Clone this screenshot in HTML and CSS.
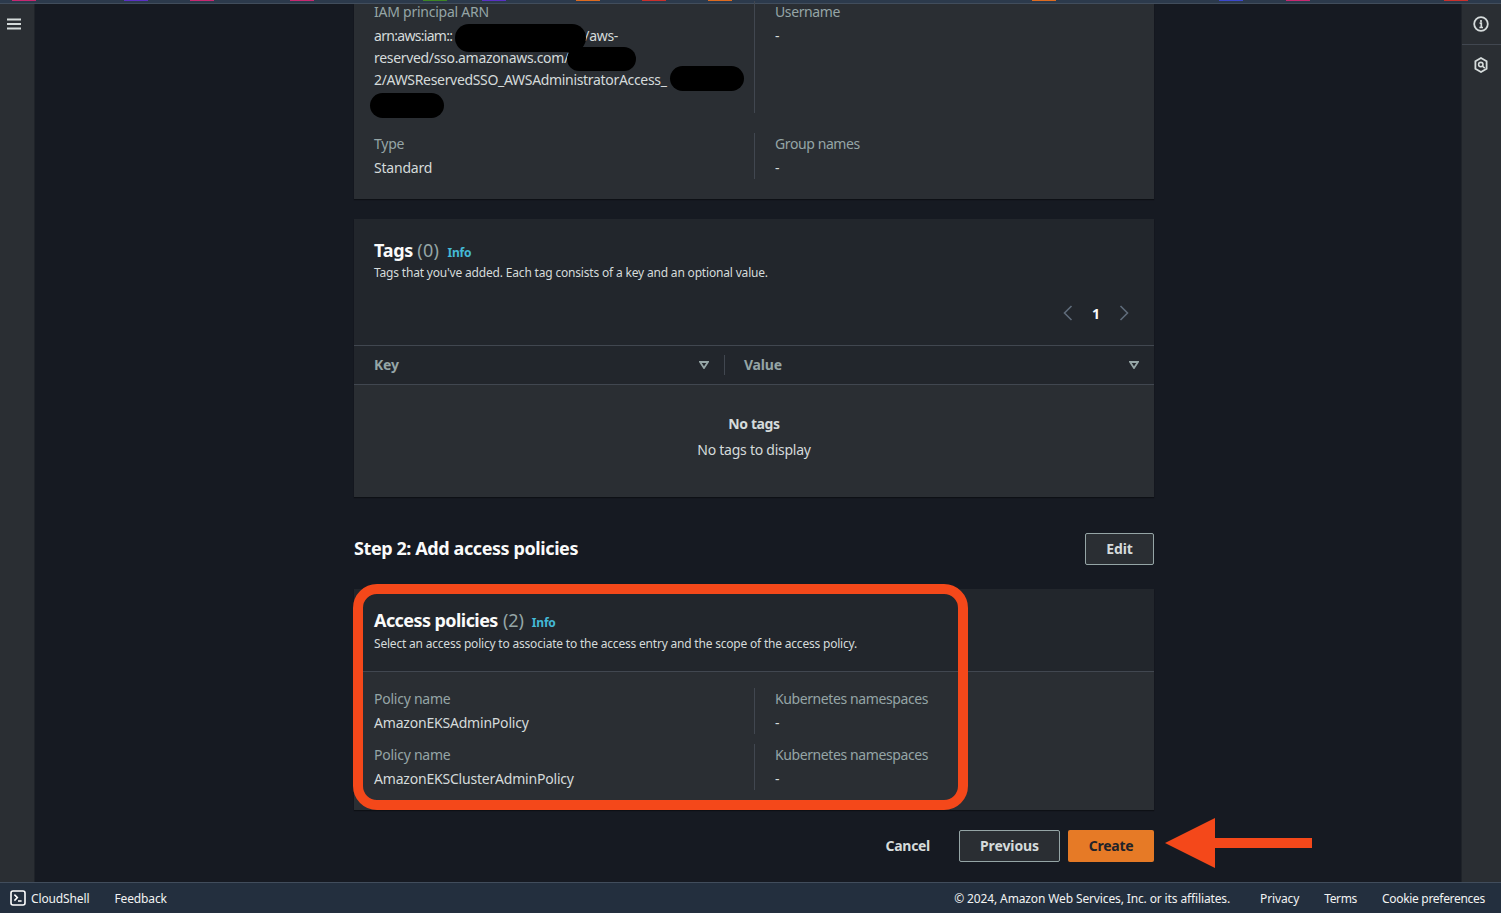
FILE: index.html
```html
<!DOCTYPE html>
<html lang="en">

<head>
    <meta charset="UTF-8">
    <meta name="viewport" content="width=device-width, initial-scale=1.0">
    <title>Review and create</title>
    <link rel="stylesheet" href="styles.css">
</head>

<body>
    <div class="stripe">
        <i class="tab pink s12"></i>
        <i class="tab purple s124"></i>
        <i class="tab pink s190"></i>
        <i class="tab pink s290"></i>
        <i class="tab green s423"></i>
        <i class="tab purple s482"></i>
        <i class="tab orange s576"></i>
        <i class="tab red s642"></i>
        <i class="tab orange s708"></i>
        <i class="tab orange s1032"></i>
        <i class="tab blue s1219"></i>
        <i class="tab pink s1286"></i>
        <i class="tab red s1444"></i>
    </div>

    <div class="shell">
        <aside class="rail rail-left">
            <svg class="menu-icon" width="14" height="12" viewBox="0 0 14 12">
                <path d="M0 1.5h14M0 6h14M0 10.5h14" stroke="#d5dbdb" stroke-width="2" />
            </svg>
        </aside>

        <main class="content">
            <section class="panel panel-top">
                <div class="kv-grid">
                    <div class="kv">
                        <div class="kv-label">IAM principal ARN</div>
                        <div class="kv-value arn"><span class="arn-head">arn:aws:iam::</span><span class="arn-gap"></span>/aws-<br>reserved/sso.amazonaws.com/<br>2/AWSReservedSSO_AWSAdministratorAccess_<br>&nbsp;</div>
                    </div>
                    <div class="kv kv-right">
                        <div class="kv-label">Username</div>
                        <div class="kv-value">-</div>
                    </div>
                    <div class="kv">
                        <div class="kv-label">Type</div>
                        <div class="kv-value">Standard</div>
                    </div>
                    <div class="kv kv-right">
                        <div class="kv-label">Group names</div>
                        <div class="kv-value">-</div>
                    </div>
                </div>
            </section>

            <section class="panel panel-tags">
                <header class="panel-head">
                    <h2>Tags <span class="count">(0)</span> <a class="info">Info</a></h2>
                    <p>Tags that you've added. Each tag consists of a key and an optional value.</p>
                </header>
                <div class="pager">
                    <svg width="10" height="16" viewBox="0 0 10 16"><path d="M8.5 1 1.5 8l7 7" fill="none" stroke="#5f6b7a" stroke-width="1.6" /></svg>
                    <b>1</b>
                    <svg width="10" height="16" viewBox="0 0 10 16"><path d="M1.5 1l7 7-7 7" fill="none" stroke="#5f6b7a" stroke-width="1.6" /></svg>
                </div>
                <div class="table-head">
                    <div class="th th-key">Key
                        <svg class="caret" width="10" height="8" viewBox="0 0 10 8"><path d="M1 1h8L5 7z" fill="none" stroke="#95a5a6" stroke-width="1.8" /></svg>
                    </div>
                    <div class="th th-value">Value
                        <svg class="caret" width="10" height="8" viewBox="0 0 10 8"><path d="M1 1h8L5 7z" fill="none" stroke="#95a5a6" stroke-width="1.8" /></svg>
                    </div>
                </div>
                <div class="empty">
                    <b>No tags</b>
                    <span>No tags to display</span>
                </div>
            </section>

            <div class="step-row">
                <h3>Step 2: Add access policies</h3>
                <button class="btn btn-edit">Edit</button>
            </div>

            <section class="panel panel-policies">
                <header class="panel-head head-policies">
                    <h2>Access policies <span class="count">(2)</span> <a class="info">Info</a></h2>
                    <p>Select an access policy to associate to the access entry and the scope of the access policy.</p>
                </header>
                <div class="kv-grid policy-grid">
                    <div class="kv">
                        <div class="kv-label">Policy name</div>
                        <div class="kv-value">AmazonEKSAdminPolicy</div>
                    </div>
                    <div class="kv kv-right">
                        <div class="kv-label">Kubernetes namespaces</div>
                        <div class="kv-value">-</div>
                    </div>
                    <div class="kv">
                        <div class="kv-label">Policy name</div>
                        <div class="kv-value">AmazonEKSClusterAdminPolicy</div>
                    </div>
                    <div class="kv kv-right">
                        <div class="kv-label">Kubernetes namespaces</div>
                        <div class="kv-value">-</div>
                    </div>
                </div>
            </section>

            <div class="actions">
                <a class="cancel">Cancel</a>
                <button class="btn btn-prev">Previous</button>
                <button class="btn btn-create">Create</button>
            </div>
        </main>

        <aside class="rail rail-right">
            <div class="rail-cell">
                <svg width="16" height="16" viewBox="0 0 16 16">
                    <circle cx="8" cy="8" r="6.8" fill="none" stroke="#d5dbdb" stroke-width="1.8" />
                    <path d="M6.6 7.2H8.3V11.5M6.4 11.5h3.6M8 4v2" fill="none" stroke="#d5dbdb" stroke-width="1.7" />
                </svg>
            </div>
            <div class="rail-cell">
                <svg width="14" height="16" viewBox="0 0 14 16">
                    <path d="M7 1l5.6 3.2v7.6L7 15l-5.6-3.2V4.2z" fill="none" stroke="#d5dbdb" stroke-width="1.8" />
                    <circle cx="6.8" cy="7.6" r="2.2" fill="none" stroke="#d5dbdb" stroke-width="1.6" />
                    <path d="M8.4 9.2l2.4 2" stroke="#d5dbdb" stroke-width="1.6" />
                </svg>
            </div>
        </aside>
    </div>

    <footer class="footer">
        <div class="footer-left">
            <svg width="16" height="16" viewBox="0 0 16 16">
                <rect x="1" y="1" width="14" height="14" rx="2" fill="none" stroke="#fff" stroke-width="1.6" />
                <path d="M4.4 4.6 7.4 7.6l-3 3M8 11h3.6" fill="none" stroke="#fff" stroke-width="1.5" />
            </svg>
            <span class="cloudshell">CloudShell</span>
            <span>Feedback</span>
        </div>
        <div class="footer-right">
            <span class="copyright">© 2024, Amazon Web Services, Inc. or its affiliates.</span>
            <span>Privacy</span>
            <span class="terms">Terms</span>
            <span class="cookie">Cookie preferences</span>
        </div>
    </footer>

    <!-- redactions and the annotation drawn on top of the screenshot -->
    <div class="blob blob1"></div>
    <div class="blob blob2"></div>
    <div class="blob blob3"></div>
    <div class="blob blob4"></div>
    <div class="callout"></div>
    <svg class="arrow" width="147" height="50" viewBox="0 0 147 50">
        <path d="M0 25 50 0v20h97v10H50v20z" fill="#f4481a" />
    </svg>
</body>

</html>
```

FILE: styles.css
```css
* {
    margin: 0;
    padding: 0;
    box-sizing: border-box;
}

body {
    width: 1501px;
    height: 913px;
    overflow: hidden;
    position: relative;
    display: flex;
    flex-direction: column;
    background-color: #161a22;
    color: #d5dbdb;
    font-family: "Noto Sans", sans-serif;
    font-size: 14px;
}

.stripe {
    height: 4px;
    position: relative;
    background-color: #2c3a4c;
    border-bottom: 1px solid #414d5c;
}

.tab {
    position: absolute;
    top: 0;
    width: 24px;
    height: 1px;
}

.pink { background-color: #c7286f; }
.purple { background-color: #5a30c4; }
.green { background-color: #3f8624; }
.orange { background-color: #dd6b20; }
.red { background-color: #c9302c; }
.blue { background-color: #3b48cc; }

.s12 { left: 12px; }
.s124 { left: 124px; }
.s190 { left: 190px; }
.s290 { left: 290px; }
.s423 { left: 423px; }
.s482 { left: 482px; }
.s576 { left: 576px; }
.s642 { left: 642px; }
.s708 { left: 708px; }
.s1032 { left: 1032px; }
.s1219 { left: 1219px; }
.s1286 { left: 1286px; }
.s1444 { left: 1444px; }

.shell {
    flex: 1;
    display: flex;
    min-height: 0;
}

.rail {
    background-color: #2a2e33;
    flex-shrink: 0;
}

.rail-left {
    width: 35px;
    border-right: 1px solid #1f2329;
    padding: 14px 0 0 7px;
}

.menu-icon {
    display: block;
}

.rail-right {
    width: 40px;
    margin-left: auto;
    border-left: 1px solid #1f2329;
}

.rail-cell {
    height: 41px;
    display: flex;
    align-items: center;
    justify-content: center;
    padding-right: 1px;
    border-bottom: 1px solid #414750;
}

.rail-cell:last-child {
    height: 40px;
    border-bottom: 0;
}

.content {
    width: 800px;
    margin-left: 319px;
    margin-right: 307px;
    display: flex;
    flex-direction: column;
}

.panel {
    background-color: #2a2e33;
    box-shadow: 0 1px 1px #0d1015;
}

.panel-top {
    height: 195px;
    padding: 0 20px;
}

.kv-grid {
    display: grid;
    grid-template-columns: 381px 1fr;
    column-gap: 20px;
}

.kv {
    font-size: 14px;
    line-height: 22px;
}

.kv-right {
    position: relative;
}

.kv-right::before {
    content: "";
    position: absolute;
    left: -21px;
    top: 0;
    bottom: 0;
    width: 1px;
    background-color: #414750;
}

.kv-label {
    color: #95a5a6;
    letter-spacing: -0.25px;
    margin-bottom: 2px;
}

.kv-right .kv-label {
    letter-spacing: -0.4px;
}

.kv-value {
    color: #d5dbdb;
    letter-spacing: -0.2px;
}

.panel-top .kv-grid {
    margin-top: -3px;
    row-gap: 20px;
}

.arn {
    height: 88px;
    letter-spacing: -0.32px;
}

.arn-head {
    letter-spacing: -0.7px;
}

.arn-gap {
    display: inline-block;
    width: 132px;
}

.panel-tags {
    margin-top: 20px;
    height: 278px;
    display: flex;
    flex-direction: column;
    background-color: #2a2e33;
}

.panel-head {
    background-color: #22262c;
    padding: 19px 20px 0;
}

.panel-head h2 {
    font-size: 18px;
    line-height: 24px;
    font-weight: 700;
    color: #fafafa;
    letter-spacing: -0.3px;
}

.count {
    font-weight: 400;
    color: #95a5a6;
    letter-spacing: 0.2px;
}

.info {
    font-size: 12px;
    font-weight: 700;
    color: #44b9d6;
    letter-spacing: -0.2px;
    margin-left: 4px;
}

.panel-head p {
    font-size: 12px;
    line-height: 16px;
    color: #d5dbdb;
    letter-spacing: -0.18px;
}

.pager {
    background-color: #22262c;
    height: 65px;
    display: flex;
    align-items: center;
    justify-content: flex-end;
    gap: 19px;
    padding: 0 25px 0 0;
    border-bottom: 1px solid #414750;
}

.pager b {
    color: #fafafa;
    font-size: 14px;
}

.table-head {
    display: flex;
    height: 39px;
    background-color: #22262c;
    border-bottom: 1px solid #414750;
}

.th {
    position: relative;
    display: flex;
    align-items: center;
    justify-content: space-between;
    padding: 0 15px 0 20px;
    color: #95a5a6;
    font-weight: 700;
    letter-spacing: -0.2px;
    line-height: 38px;
}

.th-key {
    width: 370px;
}

.th-value {
    flex: 1;
}

.th-value::before {
    content: "";
    position: absolute;
    left: 0;
    top: 9px;
    height: 20px;
    width: 1px;
    background-color: #414750;
}

.empty {
    flex: 1;
    display: flex;
    flex-direction: column;
    align-items: center;
    padding-top: 26px;
    line-height: 26px;
    letter-spacing: -0.25px;
}

.empty b {
    letter-spacing: -0.4px;
}

.step-row {
    margin-top: 36px;
    height: 32px;
    display: flex;
    align-items: center;
    justify-content: space-between;
}

.step-row h3 {
    font-size: 18px;
    font-weight: 700;
    color: #fafafa;
    letter-spacing: -0.41px;
    margin-bottom: 2px;
}

.btn {
    height: 32px;
    border-radius: 2px;
    font-family: inherit;
    font-size: 14px;
    font-weight: 700;
    letter-spacing: -0.1px;
    padding-bottom: 2px;
}

.btn-edit {
    width: 69px;
    background-color: #2a2e33;
    color: #d5dbdb;
    border: 1px solid #95a5a6;
}

.panel-policies {
    margin-top: 24px;
    height: 221px;
}

.head-policies {
    height: 83px;
    border-bottom: 1px solid #414750;
}

.panel-head.head-policies h2 {
    letter-spacing: -0.57px;
}

.head-policies .count {
    margin-left: 1px;
    letter-spacing: -0.1px;
}

.panel-head.head-policies p {
    margin-top: 1px;
    letter-spacing: -0.2px;
}

.policy-grid {
    padding: 16px 20px 0;
    row-gap: 10px;
}

.actions {
    margin-top: 20px;
    display: flex;
    align-items: center;
    justify-content: flex-end;
}

.cancel {
    font-weight: 700;
    letter-spacing: -0.3px;
    color: #d5dbdb;
    margin-right: 29px;
    margin-bottom: 2px;
}

.btn-prev {
    width: 101px;
    background-color: #2a2e33;
    color: #d5dbdb;
    border: 1px solid #95a5a6;
    margin-right: 8px;
}

.btn-create {
    width: 86px;
    background-color: #e67a26;
    color: #1f2329;
    border: 0;
    letter-spacing: -0.25px;
}

.footer {
    height: 31px;
    background-color: #232f3e;
    border-top: 1px solid #414d5c;
    display: flex;
    align-items: center;
    justify-content: space-between;
    padding: 0 16px 0 10px;
    font-size: 12px;
    color: #f2f3f3;
    letter-spacing: -0.13px;
}

.footer-left,
.footer-right {
    display: flex;
    align-items: center;
}

.footer-left svg {
    margin-right: 5px;
}

.cloudshell {
    margin-right: 25px;
}

.footer-right {
    gap: 25px;
}

.copyright {
    margin-right: 5px;
}

.terms {
    letter-spacing: -0.35px;
}

.cookie {
    letter-spacing: -0.3px;
}

.blob {
    position: absolute;
    background-color: #000;
    border-radius: 14px;
}

.blob1 { left: 455px; top: 24px; width: 131px; height: 28px; }
.blob2 { left: 567px; top: 47px; width: 69px; height: 24px; }
.blob3 { left: 670px; top: 66px; width: 74px; height: 25px; }
.blob4 { left: 370px; top: 93px; width: 74px; height: 25px; }

.callout {
    position: absolute;
    left: 353px;
    top: 584px;
    width: 615px;
    height: 226px;
    border: 10px solid #f4481a;
    border-radius: 24px;
}

.arrow {
    position: absolute;
    left: 1165px;
    top: 818px;
}
```
